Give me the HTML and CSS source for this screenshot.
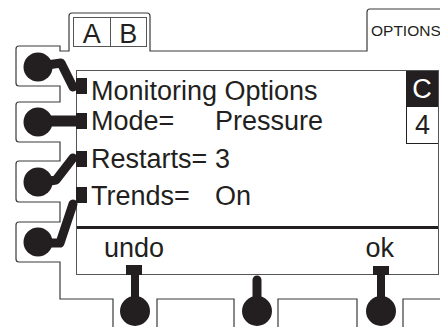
FILE: index.html
```html
<!DOCTYPE html>
<html>
<head>
    <title>Monitoring Options</title>
    <link rel="stylesheet" href="styles.css">
</head>
<body>
    <div class="device">
        <div class="tab-ab"><span>A</span><span>B</span></div>
        <div class="tab-options">OPTIONS</div>

        <div class="screen">
            <div class="menu">
                <div class="rows">
                    <div class="row"><span class="label">Monitoring Options</span></div>
                    <div class="row"><span class="label">Mode=</span><span class="value">Pressure</span></div>
                    <div class="row loose"><span class="label">Restarts=</span><span class="value">3</span></div>
                    <div class="row loose"><span class="label">Trends=</span><span class="value">On</span></div>
                </div>
                <div class="page">
                    <span class="page-letter">C</span>
                    <span class="page-num">4</span>
                </div>
            </div>
            <div class="softkeys">
                <span>undo</span>
                <span>ok</span>
            </div>
        </div>

        <svg class="wiring" width="440" height="327" viewBox="0 0 440 327">
            <path class="outline" d="M440,9 H370 Q367,9 367,12 V51 H150 V16 Q150,13 147,13 H72 Q69,13 69,16 V51 H60 V46 H19 Q16,46 16,49 V83 Q16,86 19,86 H60 V102 H19 Q16,102 16,105 V139 Q16,142 19,142 H60 V161 H19 Q16,161 16,164 V199 Q16,202 19,202 H60 V222 H19 Q16,222 16,225 V259 Q16,262 19,262 H60 V299 H113 V327 M157,327 V299 H234 V327 M278,327 V299 H357 V327 M403,327 V299 H440"/>

            <!-- side keys -->
            <circle class="knob" cx="38" cy="67" r="14.5"/>
            <polyline class="lead" points="40,66 61,63 73,87"/>
            <rect class="knob" x="76" y="78" width="11" height="16"/>

            <circle class="knob" cx="38" cy="122" r="14.5"/>
            <line class="lead thick" x1="38" y1="121" x2="80" y2="121"/>
            <rect class="knob" x="76" y="113" width="11" height="16"/>

            <circle class="knob" cx="38" cy="182" r="14.5"/>
            <polyline class="lead" points="38,183 56,180 73,158"/>
            <rect class="knob" x="76" y="151" width="11" height="16"/>

            <circle class="knob" cx="38" cy="242" r="14.5"/>
            <polyline class="lead" points="38,243 60,243 73,204"/>
            <rect class="knob" x="76" y="187" width="11" height="16"/>

            <!-- bottom keys -->
            <rect class="knob" x="126" y="265" width="16" height="10"/>
            <line class="lead stem" x1="135" y1="274" x2="135" y2="310"/>
            <circle class="knob" cx="135" cy="311" r="15"/>

            <line class="lead" x1="257" y1="280" x2="257" y2="310"/>
            <circle class="knob" cx="257" cy="311" r="15"/>

            <rect class="knob" x="373" y="266" width="16" height="9"/>
            <line class="lead stem" x1="381" y1="274" x2="381" y2="310"/>
            <circle class="knob" cx="381" cy="311" r="15"/>
        </svg>
    </div>
</body>
</html>
```

FILE: styles.css
```css
body {
    margin: 0;
    padding: 0;
    background-color: #ffffff;
    color: #231f20;
    font-family: "Liberation Sans", Arial, sans-serif;
}

.device {
    position: relative;
    width: 440px;
    height: 327px;
    overflow: hidden;
    padding: 70px 0 0 76px;
    box-sizing: border-box;
}

.wiring {
    position: absolute;
    top: 0;
    left: 0;
}

.outline {
    fill: none;
    stroke: #3a3a3a;
    stroke-width: 1.2;
}

.knob {
    fill: #231f20;
}

.lead {
    fill: none;
    stroke: #231f20;
    stroke-width: 9;
    stroke-linecap: round;
    stroke-linejoin: round;
}

.lead.thick {
    stroke-width: 11;
}

.lead.stem {
    stroke-width: 8;
    stroke-linecap: butt;
}

/* tabs */
.tab-ab {
    position: absolute;
    top: 17px;
    left: 73px;
    width: 74px;
    height: 30px;
    box-sizing: border-box;
    border: 1px solid #555555;
    display: flex;
    font-size: 27px;
}

.tab-ab span {
    flex: 1;
    height: 28px;
    line-height: 32px;
    text-align: center;
}

.tab-ab span + span {
    border-left: 1px solid #555555;
}

.tab-options {
    position: absolute;
    top: 22px;
    left: 371px;
    font-size: 15.5px;
    line-height: 18px;
    white-space: nowrap;
}

/* screen */
.screen {
    width: 363px;
    height: 205px;
    box-sizing: border-box;
    border: 1px solid #555555;
    background-color: #ffffff;
    font-size: 27px;
}

.menu {
    display: flex;
    height: 155px;
    border-bottom: 3px solid #231f20;
}

.rows {
    flex: 1;
    padding: 5px 0 0 14px;
}

.row {
    display: flex;
    height: 30px;
    line-height: 30px;
    white-space: nowrap;
}

.row.loose {
    margin-top: 7.5px;
}

.label {
    width: 124px;
    flex-shrink: 0;
}

.page {
    width: 32px;
    display: flex;
    flex-direction: column;
}

.page span {
    height: 36px;
    line-height: 36px;
    text-align: center;
}

.page-letter {
    background-color: #231f20;
    color: #ffffff;
}

.page-num {
    border-left: 1px solid #231f20;
    border-bottom: 1px solid #231f20;
}

.softkeys {
    display: flex;
    justify-content: space-between;
    padding: 4px 44px 0 27px;
    line-height: 30px;
}
```
